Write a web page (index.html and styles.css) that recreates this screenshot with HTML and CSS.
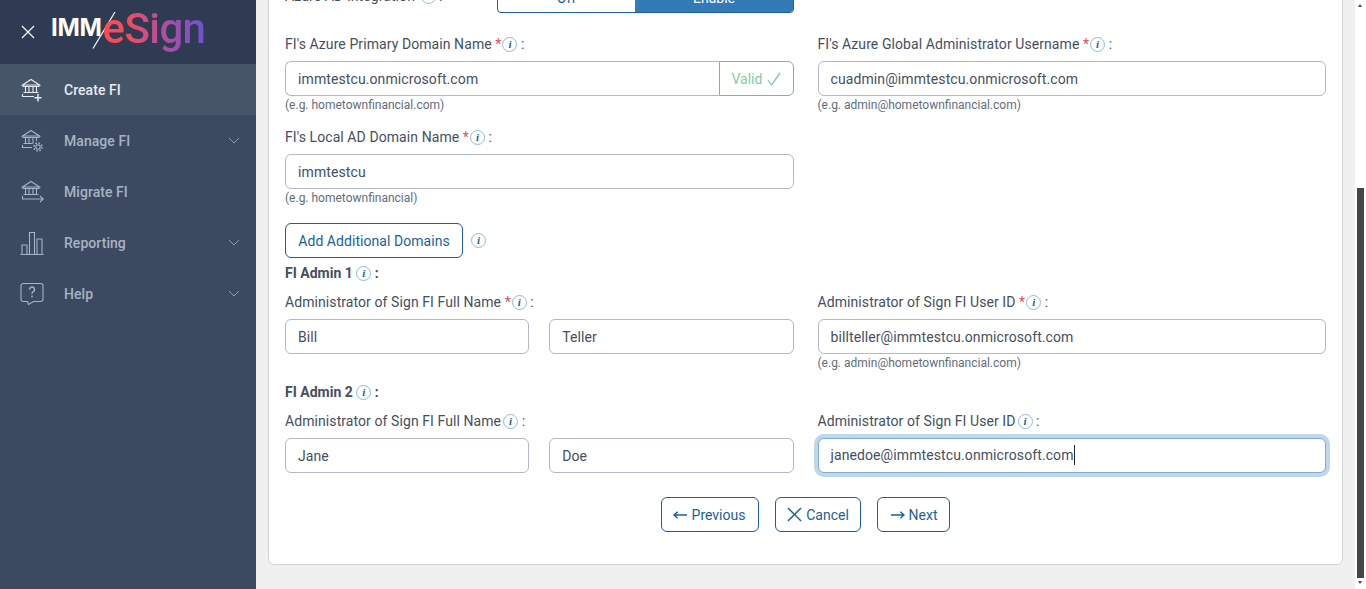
FILE: index.html
```html
<!DOCTYPE html>
<html lang="en">
<head>
<meta charset="utf-8">
<title>IMM eSign - Create FI</title>
<link rel="stylesheet" href="styles.css">
</head>
<body>
<div class="app">
  <aside class="sidebar">
    <header class="brand">
      <svg class="close" viewBox="0 0 14 14" width="14" height="14"><path d="M1 1l12 12M13 1L1 13"/></svg>
      <div class="logo">
        <span class="logo-imm">IMM</span>
        <svg class="logo-slash" viewBox="0 0 24 40" width="24" height="40"><path d="M1 37.500L23 1"/></svg>
        <span class="logo-esign">eSign</span>
      </div>
    </header>
    <nav class="nav">
      <a class="nav-item active">
        <svg class="nav-icon" viewBox="0 0 24 24"><path d="M2.500 7L11 1.500 19.500 7zM3 7v1.500h16V7M5.500 8.500v6M9 8.500v6M13 8.500v6M16.500 8.500v6M3.500 14.500h15M2.500 16v2.500h11.500"/><path class="strong" d="M18 16v7.500M14.500 19.700h7"/></svg>
        <span class="nav-label">Create FI</span>
      </a>
      <a class="nav-item">
        <svg class="nav-icon" viewBox="0 0 24 24"><path d="M2.500 7L11 1.500 19.500 7zM3 7v1.500h16V7M5.500 8.500v6M9 8.500v6M13 8.500v6M16.500 8.500v3.500M3.500 14.500h9M2.500 16v2.500h9.500"/><circle cx="18" cy="18" r="2.200"/><circle cx="18" cy="18" r="4" stroke-dasharray="1.600 1.540" stroke-width="1.600"/></svg>
        <span class="nav-label">Manage FI</span>
        <svg class="chev" viewBox="0 0 12 7" width="12" height="7"><path d="M1 1l5 5 5-5"/></svg>
      </a>
      <a class="nav-item">
        <svg class="nav-icon" viewBox="0 0 24 24"><path d="M2.500 7L11 1.500 19.500 7zM3 7v1.500h16V7M5.500 8.500v6M9 8.500v6M13 8.500v6M16.500 8.500v6M3.500 14.500h15M2.500 16v3h20.500M20 16l3.300 3-3.300 3"/></svg>
        <span class="nav-label">Migrate FI</span>
      </a>
      <a class="nav-item">
        <svg class="nav-icon" viewBox="0 0 24 24"><path d="M.5 23.500h23M2 23.500V14h5v9.500M9.500 23.500V1.500h5v22M17 23.500V8h5v15.500"/></svg>
        <span class="nav-label">Reporting</span>
        <svg class="chev" viewBox="0 0 12 7" width="12" height="7"><path d="M1 1l5 5 5-5"/></svg>
      </a>
      <a class="nav-item">
        <svg class="nav-icon" viewBox="0 0 24 24"><path d="M3.500 1.500h17a2.500 2.500 0 0 1 2.500 2.500v13a2.500 2.500 0 0 1-2.500 2.500h-7l-5 3-1-3h-4A2.500 2.500 0 0 1 1 17V4a2.500 2.500 0 0 1 2.500-2.500z"/><path class="strong" d="M9.500 7.500a2.500 2.500 0 1 1 3.800 2.100c-.9.6-1.300 1-1.300 2.200M12 13.500v1.700"/></svg>
        <span class="nav-label">Help</span>
        <svg class="chev" viewBox="0 0 12 7" width="12" height="7"><path d="M1 1l5 5 5-5"/></svg>
      </a>
    </nav>
  </aside>

  <main class="main">
    <section class="card">
      <div class="toggle-row">
        <span class="label toggle-label">Azure AD Integration <i class="info">i</i> :</span>
        <div class="toggle"><span class="toggle-off">Off</span><span class="toggle-on">Enable</span></div>
      </div>

      <div class="grid">
        <div class="field">
          <label class="label">FI's Azure Primary Domain Name <b class="req">*</b><i class="info">i</i> :</label>
          <div class="group">
            <input class="input group-input" value="immtestcu.onmicrosoft.com">
            <span class="valid">Valid
              <svg viewBox="0 0 14 14" width="14" height="14"><path d="M1 8l3.500 5L13 1"/></svg>
            </span>
          </div>
          <p class="hint">(e.g. hometownfinancial.com)</p>
        </div>
        <div class="field">
          <label class="label">FI's Azure Global Administrator Username <b class="req">*</b><i class="info">i</i> :</label>
          <input class="input" value="cuadmin@immtestcu.onmicrosoft.com">
          <p class="hint">(e.g. admin@hometownfinancial.com)</p>
        </div>
        <div class="field">
          <label class="label">FI's Local AD Domain Name <b class="req">*</b><i class="info">i</i> :</label>
          <input class="input" value="immtestcu">
          <p class="hint">(e.g. hometownfinancial)</p>
        </div>
      </div>

      <div class="domains">
        <button class="btn btn-wide">Add Additional Domains</button>
        <i class="info">i</i>
      </div>

      <h3 class="section-title first">FI Admin 1 <i class="info">i</i> :</h3>
      <div class="grid">
        <div class="field">
          <label class="label">Administrator of Sign FI Full Name <b class="req">*</b><i class="info">i</i> :</label>
          <div class="names">
            <input class="input" value="Bill">
            <input class="input" value="Teller">
          </div>
        </div>
        <div class="field">
          <label class="label">Administrator of Sign FI User ID <b class="req">*</b><i class="info">i</i> :</label>
          <input class="input" value="billteller@immtestcu.onmicrosoft.com">
          <p class="hint">(e.g. admin@hometownfinancial.com)</p>
        </div>
      </div>

      <h3 class="section-title">FI Admin 2 <i class="info">i</i> :</h3>
      <div class="grid">
        <div class="field">
          <label class="label">Administrator of Sign FI Full Name<i class="info">i</i> :</label>
          <div class="names">
            <input class="input" value="Jane">
            <input class="input" value="Doe">
          </div>
        </div>
        <div class="field">
          <label class="label">Administrator of Sign FI User ID<i class="info">i</i> :</label>
          <div class="input focused"><span class="caret">janedoe@immtestcu.onmicrosoft.com</span></div>
        </div>
      </div>

      <div class="actions">
        <button class="btn btn-prev"><svg viewBox="0 0 16 10" width="15" height="10"><path d="M15 5H1M5 1.500L1 5l4 3.500"/></svg>Previous</button>
        <button class="btn btn-cancel"><svg viewBox="0 0 16 16" width="15" height="15"><path d="M1 1l14 14M15 1L1 15"/></svg>Cancel</button>
        <button class="btn btn-next"><svg viewBox="0 0 16 10" width="15" height="10"><path d="M1 5h14M11 1.500L15 5l-4 3.500"/></svg>Next</button>
      </div>
    </section>
  </main>

  <div class="scrollbar">
    <span class="arrow up"></span>
    <span class="thumb"></span>
    <span class="arrow down"></span>
  </div>
</div>
</body>
</html>
```

FILE: styles.css
```css
* { box-sizing: border-box; }

html, body {
  margin: 0;
  height: 589px;
  overflow: hidden;
}

body {
  font-family: Roboto, "Liberation Sans", sans-serif;
  font-size: 14px;
  color: #454f5e;
  background: #f0f0f0;
}

.app {
  display: flex;
  height: 589px;
}

/* Sidebar */
.sidebar {
  flex: 0 0 256px;
  background: #3b4a61;
}

.brand {
  display: flex;
  align-items: center;
  height: 64px;
  padding-left: 21px;
  background: #2f3b52;
}

.close {
  flex: none;
}

.close path {
  fill: none;
  stroke: #f2f4f7;
  stroke-width: 1.300;
}

.logo {
  position: relative;
  display: flex;
  align-items: baseline;
  margin-left: 16px;
  margin-top: 1px;
  height: 50px;
  line-height: 50px;
}

.logo-imm {
  position: relative;
  top: -11px;
  font-family: Inter, "Liberation Sans", sans-serif;
  font-weight: 700;
  font-size: 24px;
  letter-spacing: -.3px;
  color: #fff;
}

.logo-slash {
  position: absolute;
  left: 41px;
  top: 3px;
}

.logo-slash path {
  fill: none;
  stroke: #fff;
  stroke-width: 1.200;
}

.logo-esign {
  position: relative;
  top: -4px;
  margin-left: 1px;
  font-size: 42px;
  font-weight: 500;
  letter-spacing: -.6px;
  background: linear-gradient(90deg, #ff4a50 0%, #f04d5c 25%, #b84f98 55%, #6d52d2 100%);
  -webkit-background-clip: text;
  background-clip: text;
  color: transparent;
}

.nav {
  display: flex;
  flex-direction: column;
}

.nav-item {
  display: flex;
  align-items: center;
  height: 51px;
  padding-left: 20px;
  padding-right: 16px;
  color: #a8b3c3;
  font-weight: 500;
  letter-spacing: .05px;
}

.nav-item.active {
  background: #475569;
  color: #e6ebf1;
}

.nav-icon {
  flex: none;
  width: 24px;
  height: 24px;
  margin-right: 20px;
  fill: none;
  stroke: currentColor;
  stroke-width: 1.100;
}

.nav-icon .strong {
  stroke-width: 1.500;
}

.nav-label {
  flex: 1;
}

.chev path {
  fill: none;
  stroke: #8f9cb0;
  stroke-width: 1;
}

/* Content */
.main {
  flex: 1;
  min-width: 0;
  padding: 0 12px;
}

.card {
  margin-top: -40px;
  height: 605px;
  padding: 23px 16px 0;
  background: #fff;
  border: 1px solid #d4d4d4;
  border-radius: 6px;
}

.toggle-row {
  display: flex;
  align-items: center;
  height: 29px;
  margin-bottom: 20px;
}

.toggle-label {
  flex: 0 0 212px;
  margin: 0;
}

.toggle {
  flex: 0 0 297px;
  display: flex;
  height: 29px;
  line-height: 27px;
  text-align: center;
  border: 1px solid #1a5f9a;
  border-radius: 4px;
  overflow: hidden;
}

.toggle-off {
  flex: 0 0 137px;
  color: #1a6298;
}

.toggle-on {
  flex: 1;
  background: #337ab7;
  color: #fff;
}

.grid {
  display: grid;
  grid-template-columns: 1fr 1fr;
  column-gap: 24px;
}

.field {
  min-width: 0;
}

.field + .field + .field {
  margin-top: 14px;
}

.label {
  display: block;
  height: 22px;
  line-height: 22px;
  margin-bottom: 6px;
  letter-spacing: .08px;
  color: #454f5e;
  white-space: nowrap;
}

.req {
  margin-right: -1px;
  font-weight: 400;
  color: #e2504f;
}

.info {
  display: inline-block;
  width: 15px;
  height: 15px;
  margin-left: 2px;
  border: 1px solid #8fbbdd;
  border-radius: 50%;
  font-family: "Liberation Serif", serif;
  font-size: 11px;
  font-weight: 700;
  font-style: italic;
  line-height: 13px;
  letter-spacing: 0;
  text-align: center;
  color: #1c5f97;
  vertical-align: 1px;
}

.input {
  display: block;
  width: 100%;
  height: 35px;
  padding: 0 12px;
  border: 1px solid #b4b8c5;
  border-radius: 6px;
  background: #fff;
  font: inherit;
  line-height: 33px;
  letter-spacing: .1px;
  color: #454f5e;
  outline: none;
}

.focused {
  border-color: #7dabd5;
  box-shadow: 0 0 0 4px #c0d7ea;
}

.caret {
  border-right: 1px solid #222;
  padding: 2px 0;
}

.group {
  display: flex;
}

.group-input {
  flex: 1;
  min-width: 0;
  border-right: 0;
  border-radius: 6px 0 0 6px;
}

.valid {
  flex: 0 0 75px;
  display: flex;
  align-items: center;
  gap: 5px;
  padding-left: 12px;
  border: 1px solid #6cc08b;
  border-radius: 0 6px 6px 0;
  color: #7fcf9f;
}

.valid svg path {
  fill: none;
  stroke: #7fcf9f;
  stroke-width: 1.300;
}

.hint {
  margin: 0;
  height: 16px;
  font-size: 12px;
  line-height: 19px;
  color: #626d7c;
}

.domains {
  display: flex;
  align-items: center;
  gap: 6px;
  margin-top: 18px;
}

.btn {
  display: inline-flex;
  align-items: center;
  justify-content: center;
  height: 35px;
  padding: 0;
  border: 1px solid #1a5f9a;
  border-radius: 6px;
  background: #fff;
  font: inherit;
  color: #1a6298;
}

.btn-wide {
  width: 178px;
  letter-spacing: .05px;
}

.section-title {
  height: 22px;
  margin: 11px 0 7px;
  font-size: 14px;
  line-height: 22px;
  font-weight: 700;
  color: #454f5e;
}

.section-title.first {
  margin-top: 4px;
}

.section-title .info {
  margin-left: 0;
}

.names {
  display: grid;
  grid-template-columns: 1fr 1fr;
  column-gap: 20px;
}

.actions {
  display: flex;
  justify-content: center;
  gap: 16px;
  margin-top: 24px;
}

.actions .btn svg {
  margin-right: 4px;
  fill: none;
  stroke: #1a6298;
  stroke-width: 1.500;
}

.btn-prev { width: 98px; }
.btn-prev svg { margin-left: -2px; }
.btn-cancel { width: 86px; }
.btn-next { width: 73px; }

/* Scrollbar */
.scrollbar {
  flex: 0 0 11px;
  display: flex;
  flex-direction: column;
  align-items: flex-start;
  padding-left: 2px;
  background: #fff;
}

.arrow {
  width: 0;
  height: 0;
  margin-left: 1px;
  border-left: 2.500px solid transparent;
  border-right: 2.500px solid transparent;
}

.up {
  margin-top: 4px;
  border-bottom: 3px solid #4a4a4a;
}

.thumb {
  width: 7px;
  height: 390px;
  margin-top: 181px;
  background: #454545;
}

.down {
  margin-top: 3px;
  border-top: 3px solid #4a4a4a;
}
```
